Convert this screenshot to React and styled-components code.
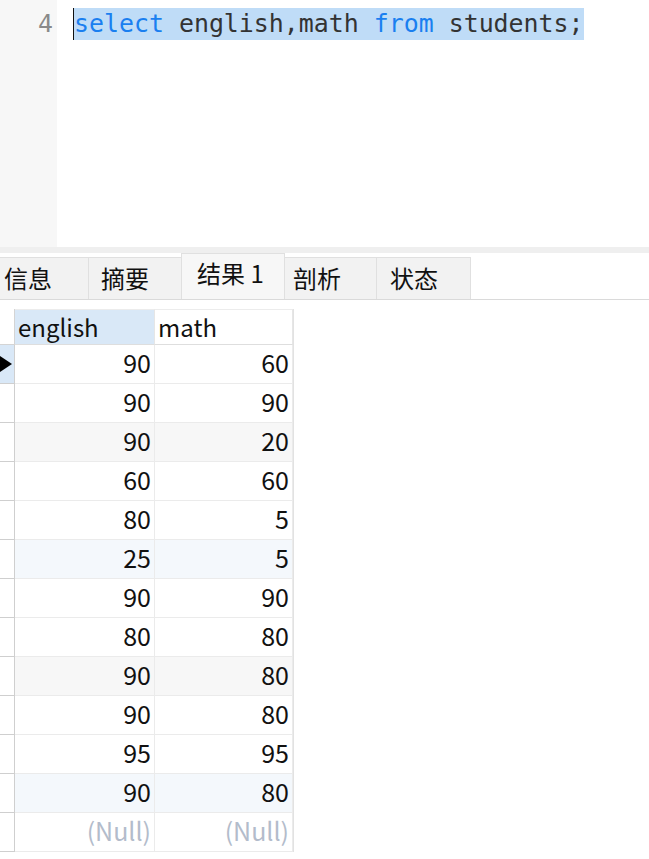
import React from "react";
import styled, { createGlobalStyle } from "styled-components";

const Global = createGlobalStyle`
  html, body { margin: 0; padding: 0; background: #ffffff; }
  body { width: 649px; height: 859px; overflow: hidden; font-family: "Noto Sans CJK SC", "Noto Sans", sans-serif; }
`;

const Page = styled.div`
  display: flex;
  flex-direction: column;
  width: 649px;
`;

const Editor = styled.div`
  display: flex;
  height: 247px;
`;

const Gutter = styled.div`
  width: 57px;
  background: #f7f7f7;
  box-sizing: border-box;
  padding: 8px 4px 0 0;
  text-align: right;
  font-family: "DejaVu Sans Mono", monospace;
  font-size: 24.9px;
  line-height: 32px;
  color: #8a8a8a;
`;

const CodeArea = styled.div`
  flex: 1;
  padding: 8px 0 0 17px;
  font-family: "DejaVu Sans Mono", monospace;
  font-size: 24.9px;
  line-height: 32px;
  white-space: pre;
  color: #333333;
`;

const Selection = styled.span`
  display: inline-block;
  background: #bfdcf7;
  border-left: 1px solid #111;
  margin-left: -1px;
`;

const Kw = styled.span`
  color: #1a7ff0;
`;

const Band = styled.div`
  height: 6px;
  background: #efefef;
`;

const TabBar = styled.div`
  display: flex;
  align-items: flex-end;
  height: 46px;
  border-bottom: 1px solid #dadada;
`;

const Tab = styled.div`
  box-sizing: border-box;
  width: ${(p) => p.$w}px;
  height: ${(p) => (p.$active ? 46 : 42)}px;
  background: ${(p) => (p.$active ? "#f7f7f7" : "#f2f2f2")};
  border: 1px solid #e0e0e0;
  border-bottom: none;
  border-left: ${(p) => (p.$first ? "none" : "1px solid #e0e0e0")};
  margin-left: ${(p) => (p.$first ? 0 : -1)}px;
  position: relative;
  z-index: ${(p) => (p.$active ? 1 : 0)};
  padding-left: ${(p) => p.$pad}px;
  padding-top: ${(p) => (p.$active ? 2 : 3)}px;
  font-size: 24px;
  line-height: 34px;
  color: #111;
  white-space: nowrap;
`;

const Grid = styled.div`
  display: grid;
  grid-template-columns: 15px 140px 138px;
  width: 293px;
  margin-top: 9px;
  border-right: 1px solid #e2e2e2;
  box-sizing: content-box;
`;

const Corner = styled.div`
  height: 36px;
  border-bottom: 1px solid #d4d4d4;
  border-right: 1px solid #d4d4d4;
  box-sizing: border-box;
  background: #fff;
`;

const Head = styled.div`
  height: 36px;
  box-sizing: border-box;
  background: ${(p) => (p.$sel ? "#d9e8f7" : "#ffffff")};
  border-bottom: 1px solid #dedede;
  border-right: 1px solid #e6e6e6;
  border-top: 1px solid #ececec;
  padding-left: 3px;
  font-size: 24px;
  line-height: 33px;
  color: #111;
`;

const Indicator = styled.div`
  height: 39px;
  box-sizing: border-box;
  border-bottom: 1px solid #cfcfcf;
  border-right: 1px solid #cfcfcf;
  background: ${(p) => (p.$cur ? "#d9e8f7" : "#ffffff")};
  display: flex;
  align-items: center;
`;

const Arrow = styled.div`
  width: 0;
  height: 0;
  border-top: 8px solid transparent;
  border-bottom: 8px solid transparent;
  border-left: 12px solid #000;
`;

const Cell = styled.div`
  height: 39px;
  box-sizing: border-box;
  border-bottom: 1px solid #ebebeb;
  border-right: 1px solid #ebebeb;
  background: ${(p) => p.$bg};
  text-align: right;
  padding-right: 3px;
  font-size: 25px;
  line-height: 35px;
  color: ${(p) => (p.$null ? "#b3bccb" : "#111")};
`;

const rows = [
  ["90", "60"],
  ["90", "90"],
  ["90", "20"],
  ["60", "60"],
  ["80", "5"],
  ["25", "5"],
  ["90", "90"],
  ["80", "80"],
  ["90", "80"],
  ["90", "80"],
  ["95", "95"],
  ["90", "80"],
  [null, null],
];

const rowBg = (i) => {
  if (i % 6 === 2) return "#f7f7f7";
  if (i % 6 === 5) return "#f4f8fc";
  return "#ffffff";
};

const tabs = [
  { label: "信息", w: 89, pad: 4 },
  { label: "摘要", w: 94, pad: 12 },
  { label: "结果 1", w: 104, pad: 15, active: true },
  { label: "剖析", w: 93, pad: 8 },
  { label: "状态", w: 95, pad: 13 },
];

export default function App() {
  return (
    <Page>
      <Global />
      <Editor>
        <Gutter>4</Gutter>
        <CodeArea>
          <Selection>
            <Kw>select</Kw> english,math <Kw>from</Kw> students;
          </Selection>
        </CodeArea>
      </Editor>
      <Band />
      <TabBar>
        {tabs.map((t, i) => (
          <Tab key={t.label} $w={t.w} $pad={t.pad} $active={t.active} $first={i === 0}>
            {t.label}
          </Tab>
        ))}
      </TabBar>
      <Grid>
        <Corner />
        <Head $sel>english</Head>
        <Head>math</Head>
        {rows.map((r, i) => (
          <React.Fragment key={i}>
            <Indicator $cur={i === 0}>{i === 0 && <Arrow />}</Indicator>
            <Cell $bg={rowBg(i)} $null={r[0] === null}>{r[0] ?? "(Null)"}</Cell>
            <Cell $bg={rowBg(i)} $null={r[1] === null}>{r[1] ?? "(Null)"}</Cell>
          </React.Fragment>
        ))}
      </Grid>
    </Page>
  );
}
